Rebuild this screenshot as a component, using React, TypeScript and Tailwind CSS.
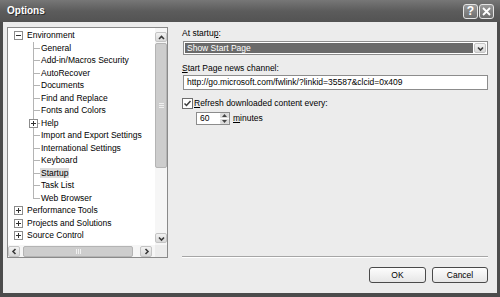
import React from 'react';

type TreeNode = {
  label: string;
  level: 0 | 1;
  box?: 'plus' | 'minus';
  selected?: boolean;
  last?: boolean;
};

const nodes: TreeNode[] = [
  { label: 'Environment', level: 0, box: 'minus' },
  { label: 'General', level: 1 },
  { label: 'Add-in/Macros Security', level: 1 },
  { label: 'AutoRecover', level: 1 },
  { label: 'Documents', level: 1 },
  { label: 'Find and Replace', level: 1 },
  { label: 'Fonts and Colors', level: 1 },
  { label: 'Help', level: 1, box: 'plus' },
  { label: 'Import and Export Settings', level: 1 },
  { label: 'International Settings', level: 1 },
  { label: 'Keyboard', level: 1 },
  { label: 'Startup', level: 1, selected: true },
  { label: 'Task List', level: 1 },
  { label: 'Web Browser', level: 1, last: true },
  { label: 'Performance Tools', level: 0, box: 'plus' },
  { label: 'Projects and Solutions', level: 0, box: 'plus' },
  { label: 'Source Control', level: 0, box: 'plus' },
];

const LINE = '#b4b4b4';

function ExpandBox({ cx, kind }: { cx: number; kind: 'plus' | 'minus' }) {
  return (
    <g>
      <rect x={cx - 4} y={2.5} width={8} height={8} fill="#fff" stroke="#8c8c8c" />
      <line x1={cx - 2} y1={6.5} x2={cx + 3} y2={6.5} stroke="#303030" />
      {kind === 'plus' && <line x1={cx + 0.5} y1={4} x2={cx + 0.5} y2={9} stroke="#303030" />}
    </g>
  );
}

// connector lines + expand box for one row
function Gutter({ node }: { node: TreeNode }) {
  const w = node.level === 0 ? 18 : 32;
  return (
    <svg width={w} height={12.5} className="shrink-0" shapeRendering="crispEdges">
      {node.level === 1 && (
        <>
          <line x1={25.5} y1={0} x2={25.5} y2={node.last ? 6.5 : 12.5} stroke={LINE} />
          <line x1={25.5} y1={6.5} x2={32} y2={6.5} stroke={LINE} />
        </>
      )}
      {node.box && <ExpandBox cx={node.level === 0 ? 10 : 25} kind={node.box} />}
    </svg>
  );
}

function Chevron({ dir }: { dir: 'up' | 'down' | 'left' | 'right' }) {
  const d = {
    up: 'M2 6 L4.5 3.5 L7 6',
    down: 'M2 3.5 L4.5 6 L7 3.5',
    left: 'M5.5 2 L3 4.5 L5.5 7',
    right: 'M3.5 2 L6 4.5 L3.5 7',
  }[dir];
  return (
    <svg width="9" height="9" viewBox="0 0 9 9">
      <path d={d} fill="none" stroke="#3a3a3a" strokeWidth="1.6" />
    </svg>
  );
}

function ScrollBtn({ dir, className }: { dir: 'up' | 'down' | 'left' | 'right'; className: string }) {
  return (
    <div
      className={`flex items-center justify-center rounded-[2px] border border-[#c4c4c4] bg-gradient-to-b from-[#f2f2f2] to-[#d8d8d8] ${className}`}
    >
      <Chevron dir={dir} />
    </div>
  );
}

function TreePanel() {
  return (
    <div className="flex h-[231px] w-[161px] flex-col border border-[#8a8a8a] bg-white">
      <div className="flex min-h-0 flex-1">
        <div className="flex-1 overflow-hidden pt-[1px]">
          {nodes.map((n) => (
            <div key={n.label} className="flex h-[12.5px] items-center whitespace-nowrap text-[8.5px] leading-none text-black">
              <Gutter node={n} />
              <span className={`px-[1px] py-[1px] ${n.selected ? 'bg-[#dcdcdc]' : ''}`}>{n.label}</span>
            </div>
          ))}
        </div>
        <div className="flex w-[12px] flex-col bg-[#f6f6f6] pb-[2px] pt-[4px]">
          <ScrollBtn dir="up" className="h-[10px] w-[12px]" />
          <div className="mt-[1px] flex h-[125px] items-center justify-center rounded-[2px] border border-[#b4b4b4] bg-[#cdcdcd]">
            <div className="flex flex-col gap-[1px]">
              <div className="h-px w-[5px] bg-[#f0f0f0]" />
              <div className="h-px w-[5px] bg-[#f0f0f0]" />
              <div className="h-px w-[5px] bg-[#f0f0f0]" />
            </div>
          </div>
          <div className="flex-1" />
          <ScrollBtn dir="down" className="h-[10px] w-[12px]" />
        </div>
      </div>
      <div className="flex h-[12px] items-center bg-[#f6f6f6]">
        <ScrollBtn dir="left" className="h-[11px] w-[12px]" />
        <div className="ml-[3px] flex h-[11px] w-[110px] items-center justify-center rounded-[2px] border border-[#b4b4b4] bg-[#cdcdcd]">
          <div className="flex gap-[1px]">
            <div className="h-[5px] w-px bg-[#f0f0f0]" />
            <div className="h-[5px] w-px bg-[#f0f0f0]" />
            <div className="h-[5px] w-px bg-[#f0f0f0]" />
          </div>
        </div>
        <div className="flex-1" />
        <ScrollBtn dir="right" className="h-[11px] w-[12px]" />
        <div className="ml-[3px] h-[12px] w-[12px] bg-[#ececec]" />
      </div>
    </div>
  );
}

function XpButton({ label }: { label: string }) {
  return (
    <button className="flex h-[16px] w-full items-center justify-center rounded-[3px] border border-[#4a4a4a] bg-gradient-to-b from-[#fdfdfd] to-[#e6e6e6] text-[8.5px] leading-none text-black">
      {label}
    </button>
  );
}

function CaptionButton({ children }: { children: React.ReactNode }) {
  return (
    <div className="flex h-[15px] w-[15px] items-center justify-center rounded-[3px] border border-[#e4e4e4] bg-gradient-to-b from-[#9a9a9a] to-[#6e6e6e]">
      {children}
    </div>
  );
}

export default function App() {
  return (
    <div className="flex h-[297px] w-[500px] flex-col bg-[#4c4c4c] font-['Liberation_Sans',Arial,sans-serif]">
      {/* title bar */}
      <div className="flex h-[22px] items-center bg-gradient-to-b from-[#777777] via-[#5c5c5c] to-[#535353] pl-[7px] pr-[6px]">
        <span className="text-[10px] font-bold leading-none text-white [text-shadow:1px_1px_0_#2e2e2e]">Options</span>
        <div className="ml-auto flex gap-[1px]">
          <CaptionButton>
            <span className="text-[12px] font-bold leading-none text-white">?</span>
          </CaptionButton>
          <CaptionButton>
            <svg width="9" height="9" viewBox="0 0 9 9">
              <path d="M1 1 L8 8 M8 1 L1 8" stroke="#fff" strokeWidth="1.8" />
            </svg>
          </CaptionButton>
        </div>
      </div>

      {/* dialog body */}
      <div className="mx-[3px] mb-[4px] flex flex-1 bg-[#ececec] pl-[4px] pt-[5px]">
        <TreePanel />

        <div className="ml-[14px] flex h-[256px] w-[306px] flex-col text-[8.5px] leading-none text-black">
          <div className="flex h-[12px] items-center">
            At startu<span className="underline">p</span>:
          </div>
          <div className="ml-[1px] mt-[2px] flex h-[14px] border border-[#8c8c8c] bg-white p-[1px]">
            <div className="flex flex-1 items-center bg-[#6a6a6a] pl-[2px] text-white">Show Start Page</div>
            <div className="ml-[1px] flex w-[12px] items-center justify-center rounded-[2px] border border-[#c4c4c4] bg-gradient-to-b from-[#f2f2f2] to-[#d8d8d8]">
              <Chevron dir="down" />
            </div>
          </div>

          <div className="mt-[7px] flex h-[12px] items-center">
            <span className="underline">S</span>tart Page news channel:
          </div>
          <div className="ml-[1px] mt-[1px] flex h-[15px] items-center border border-[#8c8c8c] bg-white pl-[3px]">
            http://go.microsoft.com/fwlink/?linkid=35587&amp;clcid=0x409
          </div>

          <div className="mt-[7px] flex h-[12px] items-center">
            <div className="flex h-[11px] w-[11px] items-center justify-center border border-[#6e6e6e] bg-white">
              <svg width="9" height="9" viewBox="0 0 9 9">
                <path d="M1.5 4.5 L3.5 6.5 L7.5 2" fill="none" stroke="#3c3c3c" strokeWidth="1.5" />
              </svg>
            </div>
            <span className="ml-[1px]">
              <span className="underline">R</span>efresh downloaded content every:
            </span>
          </div>
          <div className="mt-[3px] flex h-[13px] items-center pl-[14px]">
            <div className="flex h-[13px] w-[34px] items-center border border-[#8c8c8c] bg-white pl-[3px]">
              <span className="flex-1">60</span>
              <div className="flex h-[11px] w-[9px] flex-col">
                <div className="flex flex-1 items-center justify-center rounded-[1px] bg-[#dcdcdc]">
                  <svg width="5" height="3" viewBox="0 0 5 3"><path d="M0 3 L2.5 0 L5 3 Z" fill="#444" /></svg>
                </div>
                <div className="mt-[1px] flex flex-1 items-center justify-center rounded-[1px] bg-[#dcdcdc]">
                  <svg width="5" height="3" viewBox="0 0 5 3"><path d="M0 0 L2.5 3 L5 0 Z" fill="#444" /></svg>
                </div>
              </div>
            </div>
            <span className="ml-[3px]">
              <span className="underline">m</span>inutes
            </span>
          </div>

          <div className="flex-1" />
          <div className="h-[2px] border-t border-[#a6a6a6] border-b-white border-b" />
          <div className="mt-[9px] flex justify-end gap-[6px]">
            <div className="w-[57px]">
              <XpButton label="OK" />
            </div>
            <div className="w-[56px]">
              <XpButton label="Cancel" />
            </div>
          </div>
        </div>
      </div>
    </div>
  );
}
